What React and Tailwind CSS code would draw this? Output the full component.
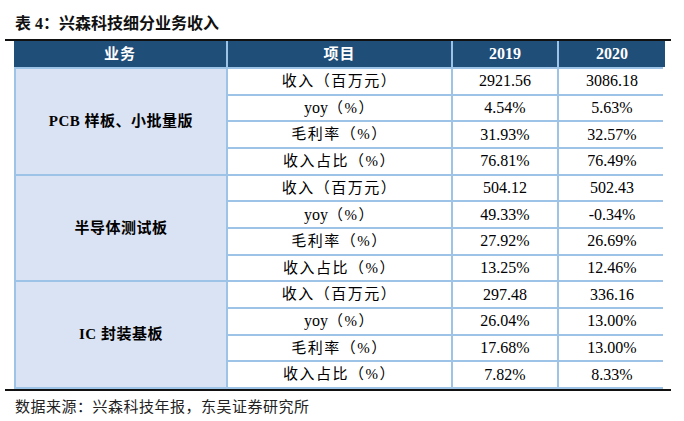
const groups = [
  {
    name: "PCB 样板、小批量版",
    rows: [
      ["收入（百万元）", "2921.56", "3086.18"],
      ["yoy（%）", "4.54%", "5.63%"],
      ["毛利率（%）", "31.93%", "32.57%"],
      ["收入占比（%）", "76.81%", "76.49%"],
    ],
  },
  {
    name: "半导体测试板",
    rows: [
      ["收入（百万元）", "504.12", "502.43"],
      ["yoy（%）", "49.33%", "-0.34%"],
      ["毛利率（%）", "27.92%", "26.69%"],
      ["收入占比（%）", "13.25%", "12.46%"],
    ],
  },
  {
    name: "IC 封装基板",
    rows: [
      ["收入（百万元）", "297.48", "336.16"],
      ["yoy（%）", "26.04%", "13.00%"],
      ["毛利率（%）", "17.68%", "13.00%"],
      ["收入占比（%）", "7.82%", "8.33%"],
    ],
  },
];

const font = "font-['Liberation_Serif','Noto_Sans_CJK_SC',serif]";

const Item = ({ label }) =>
  label.startsWith("yoy") ? (
    <span className="text-[15px]">
      <span className="text-[16px]">yoy</span>
      <span className="tracking-[1.5px]">（%）</span>
    </span>
  ) : (
    <span className="text-[15px] tracking-[1.5px]">{label}</span>
  );

export default function App() {
  return (
    <div className={`w-[684px] h-[421px] bg-white text-black ${font}`}>
      <div className="h-[39px] pl-[15px] pt-[14px] text-[16px] leading-[20px] font-bold text-[#111]">
        表 4：兴森科技细分业务收入
      </div>
      <div className="ml-[5px] w-[666px] h-[2px] bg-[#111]" />
      <div className="ml-[14px] w-[649px] grid grid-cols-[210px_223px_104px_106px] grid-rows-[26px_repeat(12,24.67px)] gap-[2px] bg-[#9dc3e6] pb-[2px] pl-[2px]">
        <div className="bg-[#1f4e79] text-white font-bold text-[15px] tracking-[1px] flex items-center justify-center -ml-[2px]">
          业务
        </div>
        <div className="bg-[#1f4e79] text-white font-bold text-[15px] tracking-[1px] flex items-center justify-center">
          项目
        </div>
        <div className="bg-[#1f4e79] text-white font-bold text-[16px] flex items-center justify-center">
          2019
        </div>
        <div className="bg-[#1f4e79] text-white font-bold text-[16px] flex items-center justify-center">
          2020
        </div>
        {groups.map((g) => [
          <div
            key={g.name}
            className="row-span-4 bg-[#dae3f3] font-bold text-[15px] tracking-[0.5px] flex items-center justify-center"
          >
            {g.name}
          </div>,
          ...g.rows.map((r, i) => [
            <div
              key={g.name + i + "a"}
              className="bg-white flex items-center justify-center"
            >
              <Item label={r[0]} />
            </div>,
            <div
              key={g.name + i + "b"}
              className="bg-white text-[16px] flex items-center justify-center"
            >
              {r[1]}
            </div>,
            <div
              key={g.name + i + "c"}
              className="bg-white text-[16px] flex items-center justify-center"
            >
              {r[2]}
            </div>,
          ]),
        ])}
      </div>
      <div className="ml-[5px] w-[666px] h-[2px] bg-[#111]" />
      <div className="pl-[15px] pt-[7px] text-[15px] leading-[18px] tracking-[0.5px] text-[#222]">
        数据来源：兴森科技年报，东吴证券研究所
      </div>
    </div>
  );
}
